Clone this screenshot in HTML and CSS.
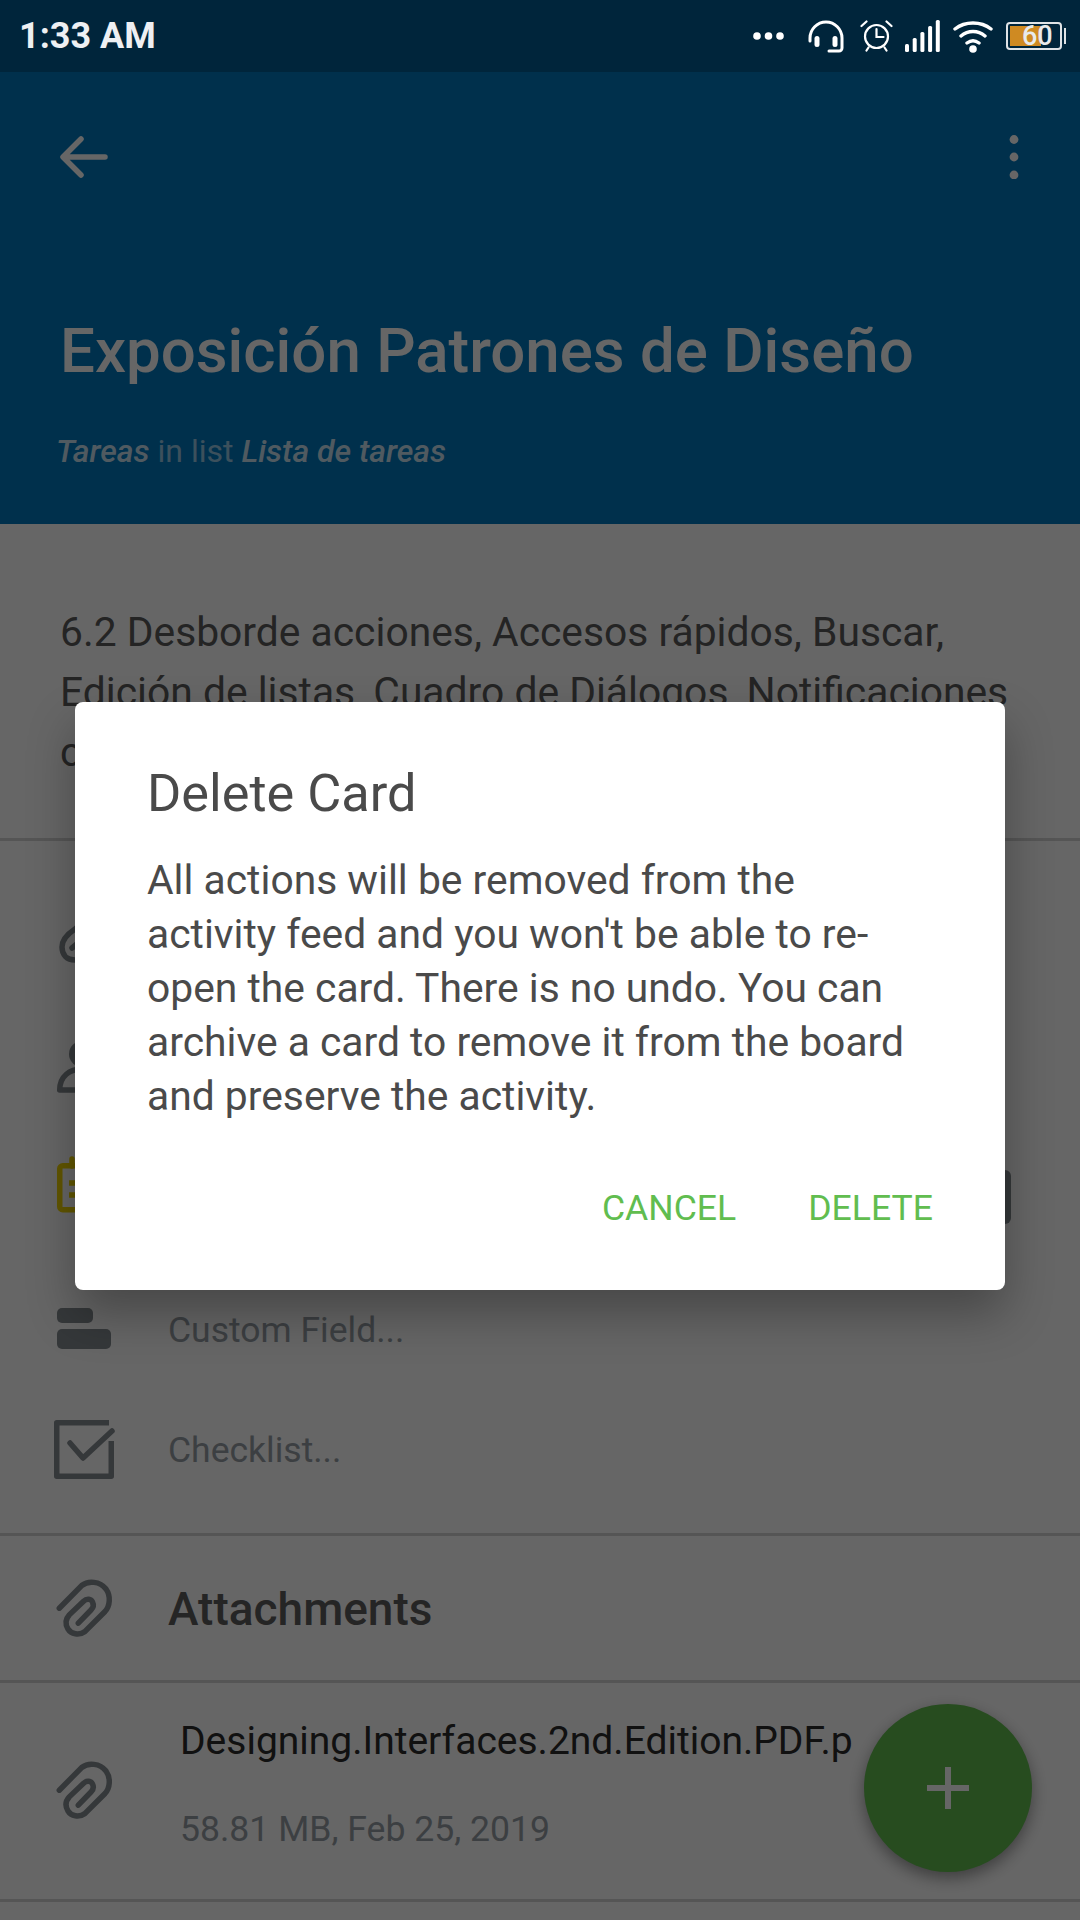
FILE: index.html
```html
<!DOCTYPE html>
<html lang="es">
<head>
  <meta charset="UTF-8" />
  <meta name="viewport" content="width=device-width, initial-scale=1.0" />
  <title>Delete Card</title>
  <link rel="stylesheet" href="styles.css">
</head>
<body>
  <div class="phone">
    <div class="status-bar">
      <span class="clock">1:33 AM</span>
      <div class="status-icons">
        <svg class="st-dots" width="31" height="8" viewBox="0 0 31 8"><circle cx="4" cy="4" r="3.800" fill="#fff"/><circle cx="15.500" cy="4" r="3.800" fill="#fff"/><circle cx="27" cy="4" r="3.800" fill="#fff"/></svg>
        <svg class="st-head" width="36" height="33" viewBox="0 0 36 33" fill="none" stroke="#fff" stroke-width="3" stroke-linecap="round"><path d="M2 21V18a16 16 0 0 1 32 0v10a3 3 0 0 1-3 3H21"/><rect x="6.500" y="16" width="5" height="11" rx="2.500" fill="#fff" stroke="none"/><rect x="24.500" y="16" width="5" height="11" rx="2.500" fill="#fff" stroke="none"/></svg>
        <svg class="st-alarm" width="33" height="32" viewBox="0 0 33 32" fill="none" stroke="#fff" stroke-width="2.200" stroke-linecap="round"><circle cx="16.500" cy="16.500" r="11.500"/><path d="M16.500 9v8h7M1.500 6l5-4.500M31.500 6l-5-4.500M6.500 30.500l2-3M26.500 30.500l-2-3"/></svg>
        <svg class="st-signal" width="35" height="32" viewBox="0 0 35 32" fill="#fff"><rect x="0" y="24" width="4" height="8" rx="1.500"/><rect x="7.700" y="18" width="4" height="14" rx="1.500"/><rect x="15.400" y="12" width="4" height="20" rx="1.500"/><rect x="23.100" y="6" width="4" height="26" rx="1.500"/><rect x="30.800" y="0" width="4" height="32" rx="1.500"/></svg>
        <svg class="st-wifi" width="40" height="33" viewBox="0 0 40 33" fill="none" stroke="#fff" stroke-width="3.400" stroke-linecap="round"><path d="M2 9c10-8 26-8 36 0M8 16c7-6 17-6 24 0M14 23c4-3 8-3 12 0"/><circle cx="20" cy="29" r="3.800" fill="#fff" stroke="none"/></svg>
        <div class="battery">
          <div class="battery-body"><div class="battery-fill"></div><span class="battery-num">60</span></div>
          <div class="battery-tip"></div>
        </div>
      </div>
    </div>

    <header class="card-header">
      <div class="toolbar">
        <svg width="48" height="42" viewBox="0 0 48 42" fill="none" stroke="#fff" stroke-width="5.500" stroke-linecap="round" stroke-linejoin="round"><path d="M45 21H4M21 3L3 21l18 18"/></svg>
        <svg width="10" height="44" viewBox="0 0 10 44" fill="#fff"><circle cx="5" cy="4.500" r="4.400"/><circle cx="5" cy="22" r="4.400"/><circle cx="5" cy="40" r="4.400"/></svg>
      </div>
      <h1 class="card-title">Exposición Patrones de Diseño</h1>
      <p class="card-sub"><b>Tareas</b> in list <b>Lista de tareas</b></p>
    </header>

    <section class="desc">6.2 Desborde acciones, Accesos rápidos, Buscar, Edición de listas, Cuadro de Diálogos, Notificaciones c</section>

    <section class="actions">
      <div class="row">
        <svg class="icon" viewBox="0 0 60 60" fill="none" stroke="#858c91" stroke-width="5.500" stroke-linecap="round"><path d="M38 -2L21 13C12 19 8 25 8 31c0 8 5 13 13 13 7 0 13-3 19-8"/><path d="M40 14L18 32"/></svg>
      </div>
      <div class="row">
        <svg class="icon" viewBox="0 0 60 60" fill="none" stroke="#858c91" stroke-width="5.500" stroke-linejoin="round"><circle cx="28" cy="18" r="13" fill="#858c91" stroke="none"/><path d="M5.700 54C5.700 40 16 33 28 33s22 7 22 21z"/></svg>
      </div>
      <div class="row row-due">
        <svg class="icon" viewBox="0 0 60 60" fill="none" stroke="#f2d600" stroke-width="5.500" stroke-linecap="round"><rect x="5.750" y="9.750" width="48" height="44" rx="3"/><path d="M18 3v7M42 3v7"/><path d="M15 27h26M15 39h26" stroke-linecap="butt"/></svg>
        <span class="chip"></span>
      </div>
      <div class="row">
        <svg class="icon" viewBox="0 0 60 60" fill="#858c91"><rect x="3" y="8" width="36" height="15" rx="5"/><rect x="3" y="29" width="54" height="20" rx="5"/></svg>
        <span class="row-text">Custom Field...</span>
      </div>
      <div class="row">
        <svg class="icon" viewBox="0 0 60 60" fill="none" stroke="#858c91" stroke-width="5.500" stroke-linejoin="round"><path d="M55 2.750H2.750V56.250H57.250V21"/><path d="M16 23l13 15 29-27" stroke-linecap="round"/></svg>
        <span class="row-text">Checklist...</span>
      </div>
    </section>

    <section class="attach-head">
      <svg class="icon" viewBox="0 0 60 60" fill="none" stroke="#858c91" stroke-width="5.500" stroke-linecap="round"><path d="M5.300 29.200L27.700 6.500C34 1.500 46 2 52 10c5 7 4 17-1 22.500L31 52.500C25 57 17 55 14 50c-3-5-2.500-10 1.300-14.200L29.300 22.500C33 19 37 20 38.500 23c1.500 3 .5 6-1.500 8L24.300 44.200"/></svg>
      <h2 class="attach-title">Attachments</h2>
    </section>

    <section class="attach-item">
      <svg class="icon" viewBox="0 0 60 60" fill="none" stroke="#858c91" stroke-width="5.500" stroke-linecap="round"><path d="M5.300 29.200L27.700 6.500C34 1.500 46 2 52 10c5 7 4 17-1 22.500L31 52.500C25 57 17 55 14 50c-3-5-2.500-10 1.300-14.200L29.300 22.500C33 19 37 20 38.500 23c1.500 3 .5 6-1.500 8L24.300 44.200"/></svg>
      <div class="attach-info">
        <div class="attach-name">Designing.Interfaces.2nd.Edition.PDF.p</div>
        <div class="attach-meta">58.81 MB, Feb 25, 2019</div>
      </div>
    </section>

    <div class="fab">
      <svg width="42" height="42" viewBox="0 0 42 42" fill="#fff"><rect x="0" y="18" width="42" height="6"/><rect x="18" y="0" width="6" height="42"/></svg>
    </div>

    <div class="scrim"></div>

    <div class="dialog">
      <h3 class="dialog-title">Delete Card</h3>
      <p class="dialog-text">All actions will be removed from the activity feed and you won't be able to re-open the card. There is no undo. You can archive a card to remove it from the board and preserve the activity.</p>
      <div class="dialog-buttons">
        <span class="dialog-btn">CANCEL</span>
        <span class="dialog-btn">DELETE</span>
      </div>
    </div>
  </div>
</body>
</html>
```

FILE: styles.css
```css
* {
  box-sizing: border-box;
}
html, body {
  margin: 0;
  padding: 0;
}
body {
  font-family: Roboto, "Liberation Sans", sans-serif;
  background-color: #fff;
}
.phone {
  position: relative;
  width: 1080px;
  height: 1920px;
  overflow: hidden;
  background-color: #fff;
}

/* status bar sits above the scrim */
.status-bar {
  position: relative;
  z-index: 3;
  height: 72px;
  background-color: #00253b;
  display: flex;
  align-items: center;
  justify-content: space-between;
  padding: 0 14px 0 19px;
  color: #eef0f3;
}
.clock {
  font-size: 36px;
  font-weight: 700;
}
.status-icons {
  display: flex;
  align-items: center;
}
.st-dots { margin-right: 24px; }
.st-head { margin-right: 16px; }
.st-alarm { margin-right: 12px; }
.st-signal { margin-right: 13px; }
.st-wifi { margin-right: 13px; }
.battery {
  display: flex;
  align-items: center;
}
.battery-body {
  position: relative;
  width: 56px;
  height: 28px;
  border: 2px solid #dfe3e6;
  border-radius: 4px;
  padding: 2px;
}
.battery-fill {
  width: 65%;
  height: 100%;
  background-color: #cf8a22;
}
.battery-num {
  position: absolute;
  top: -3px;
  left: 14px;
  font-size: 27px;
  line-height: 30px;
  font-weight: 500;
  color: #e8eaec;
}
.battery-tip {
  width: 2px;
  height: 16px;
  margin-left: 2px;
  background-color: #dfe3e6;
}

.card-header {
  height: 452px;
  background-color: #0079bf;
  color: #fff;
  padding: 0 61px 0 60px;
}
.toolbar {
  display: flex;
  justify-content: space-between;
  align-items: center;
  padding-top: 63px;
}
.card-title {
  margin: 139px 0 0;
  font-size: 61.8px;
  line-height: 66px;
  font-weight: 500;
  white-space: nowrap;
}
.card-sub {
  margin: 49px 0 0 -4px;
  font-size: 32px;
  line-height: 36px;
  color: rgba(255, 255, 255, 0.6);
}
.card-sub b {
  font-style: italic;
  font-weight: 500;
  color: rgba(255, 255, 255, 0.8);
}

.desc {
  height: 317px;
  padding: 78px 60px 0 60px;
  font-size: 40.8px;
  line-height: 60px;
  color: #5a5a5a;
  border-bottom: 3px solid #d5d5d5;
}

.actions {
  height: 695px;
  padding-top: 45px;
  border-bottom: 3px solid #d5d5d5;
}
.row {
  display: flex;
  align-items: center;
  height: 120px;
  padding-left: 54px;
}
.row-due {
  height: 144px;
  align-items: flex-start;
}
.row-due .icon {
  margin-top: 30px;
}
.icon {
  flex: none;
  width: 60px;
  height: 60px;
  overflow: visible;
}
.row-text {
  margin-left: 54px;
  font-size: 35.5px;
  color: #969ea5;
}
.chip {
  margin-left: auto;
  margin-right: 69px;
  margin-top: 44px;
  width: 60px;
  height: 54px;
  border-radius: 6px;
  background-color: #858c91;
}

.attach-head {
  display: flex;
  align-items: center;
  height: 147px;
  padding-left: 54px;
  padding-top: 1px;
  border-bottom: 3px solid #d5d5d5;
}
.attach-title {
  margin: 0 0 0 54px;
  font-size: 46px;
  font-weight: 500;
  color: #5c5c5c;
}

.attach-item {
  display: flex;
  align-items: center;
  height: 219px;
  padding-left: 54px;
  border-bottom: 3px solid #d5d5d5;
}
.attach-info {
  margin-left: 66px;
  width: 680px;
  padding-bottom: 15px;
  overflow: hidden;
  white-space: nowrap;
}
.attach-name {
  font-size: 39px;
  line-height: 44px;
  color: #2b2b2b;
}
.attach-meta {
  margin-top: 46px;
  font-size: 35.6px;
  line-height: 40px;
  color: #969ea5;
}

.fab {
  position: absolute;
  left: 864px;
  top: 1704px;
  width: 168px;
  height: 168px;
  border-radius: 50%;
  background-color: #61bd4f;
  box-shadow: 0 6px 16px rgba(0, 0, 0, 0.4);
  display: flex;
  align-items: center;
  justify-content: center;
}

.scrim {
  position: absolute;
  inset: 0;
  z-index: 1;
  background-color: rgba(0, 0, 0, 0.6);
}

.dialog {
  position: absolute;
  z-index: 2;
  left: 75px;
  top: 702px;
  width: 930px;
  height: 588px;
  padding: 0 73px 0 72px;
  background-color: #fff;
  border-radius: 8px;
  box-shadow: 0 24px 48px rgba(0, 0, 0, 0.3);
}
.dialog-title {
  margin: 62px 0 0;
  font-size: 52.3px;
  line-height: 58px;
  font-weight: 400;
  color: #4a4a4a;
}
.dialog-text {
  margin: 31px 0 0;
  font-size: 40.8px;
  line-height: 54px;
  color: #4a4a4a;
}
.dialog-buttons {
  display: flex;
  justify-content: flex-end;
  gap: 72px;
  margin: 63px -1px 0 0;
}
.dialog-btn {
  font-size: 35.6px;
  line-height: 44px;
  color: #61bd4f;
}
```
